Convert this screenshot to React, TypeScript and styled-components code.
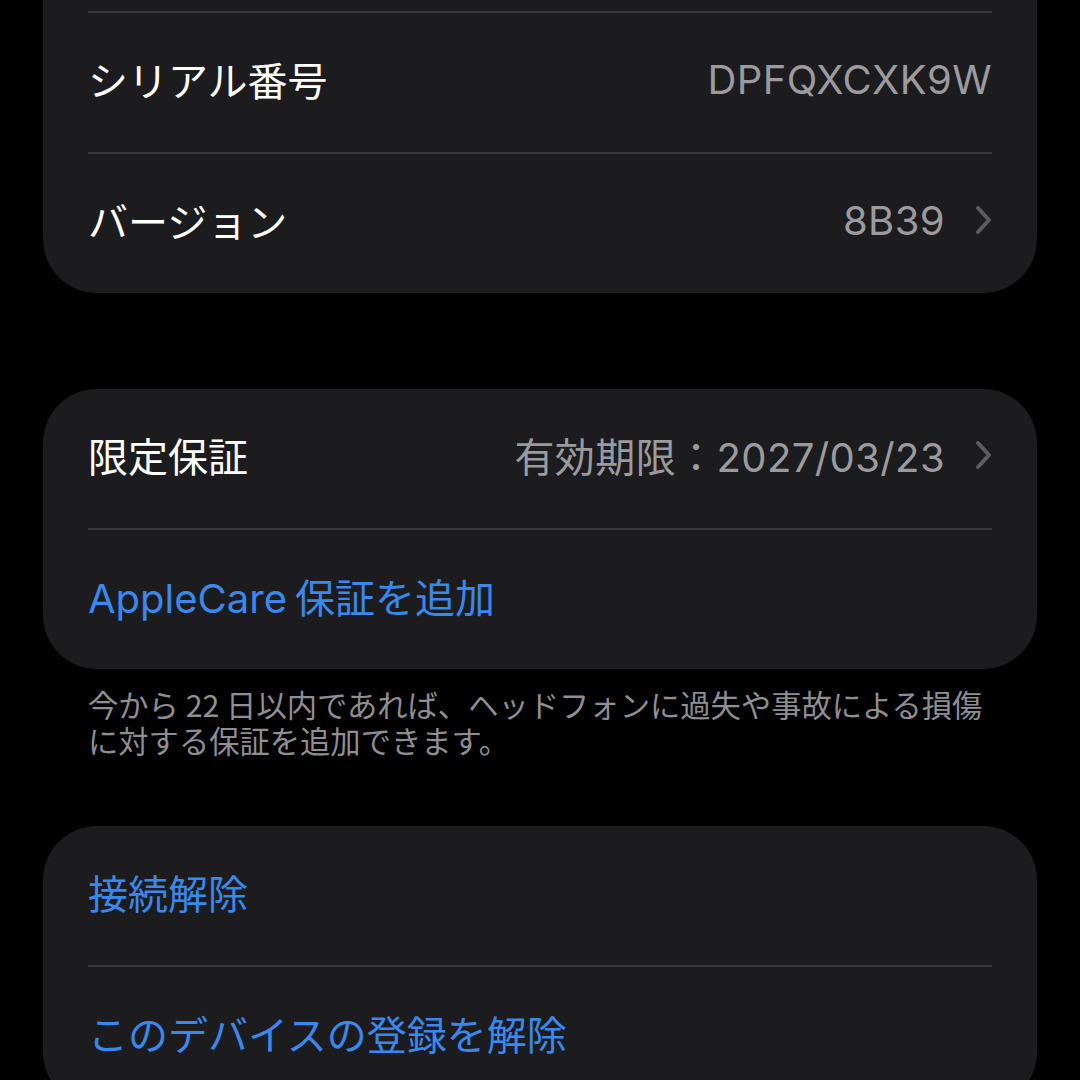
import React from "react";
import styled, { createGlobalStyle } from "styled-components";

const GlobalStyle = createGlobalStyle`
  html, body {
    margin: 0;
    padding: 0;
    background: #000000;
  }
  body {
    font-family: "Inter", "Noto Sans CJK JP", sans-serif;
    -webkit-font-smoothing: antialiased;
  }
`;

const Page = styled.div`
  width: 1080px;
  height: 1080px;
  overflow: hidden;
  background: #000000;
  padding: 0 43px;
  box-sizing: border-box;
  display: flex;
  flex-direction: column;
`;

const Card = styled.div<{ $offsetTop?: number; $gapTop?: number }>`
  background: #1c1c1e;
  border-radius: 54px;
  margin-top: ${(p) => (p.$offsetTop !== undefined ? `${p.$offsetTop}px` : `${p.$gapTop ?? 0}px`)};
  padding: 0 45px;
  display: flex;
  flex-direction: column;
  flex-shrink: 0;
`;

const Separator = styled.div`
  height: 2px;
  background: #38383b;
`;

const Row = styled.div`
  height: 139px;
  box-sizing: border-box;
  padding-bottom: 7px;
  display: flex;
  align-items: center;
  justify-content: space-between;
`;

const Label = styled.span<{ $blue?: boolean }>`
  font-size: 40px;
  color: ${(p) => (p.$blue ? "#3a88eb" : "#ffffff")};
  white-space: nowrap;
`;

const Latin = styled.span`
  margin-right: 8px;
`;

const Value = styled.span`
  display: flex;
  align-items: center;
  gap: 30px;
  font-size: 40px;
  letter-spacing: 0.4px;
  color: #9a9a9f;
  white-space: nowrap;
`;

const Footer = styled.p`
  margin: 17px 0 0;
  padding: 0 45px;
  font-size: 30.3px;
  line-height: 36px;
  color: #8e8e93;
  font-family: "Noto Sans CJK JP", sans-serif;
`;

const Chevron = () => (
  <svg width="17" height="30" viewBox="0 0 17 30" aria-hidden="true">
    <path
      d="M3 3 L14 15 L3 27"
      fill="none"
      stroke="#5c5c60"
      strokeWidth="4"
      strokeLinecap="round"
      strokeLinejoin="round"
    />
  </svg>
);

export default function App() {
  return (
    <>
      <GlobalStyle />
      <Page>
        <Card $offsetTop={-128}>
          <Row />
          <Separator />
          <Row>
            <Label>シリアル番号</Label>
            <Value>DPFQXCXK9W</Value>
          </Row>
          <Separator />
          <Row>
            <Label>バージョン</Label>
            <Value>
              8B39
              <Chevron />
            </Value>
          </Row>
        </Card>

        <Card $gapTop={96}>
          <Row>
            <Label>限定保証</Label>
            <Value>
              有効期限：2027/03/23
              <Chevron />
            </Value>
          </Row>
          <Separator />
          <Row>
            <Label $blue>
              <Latin>AppleCare</Latin>保証を追加
            </Label>
          </Row>
        </Card>

        <Footer>
          今から 22 日以内であれば、ヘッドフォンに過失や事故による損傷に対する保証を追加できます。
        </Footer>

        <Card $gapTop={68}>
          <Row>
            <Label $blue>接続解除</Label>
          </Row>
          <Separator />
          <Row>
            <Label $blue>このデバイスの登録を解除</Label>
          </Row>
        </Card>
      </Page>
    </>
  );
}
